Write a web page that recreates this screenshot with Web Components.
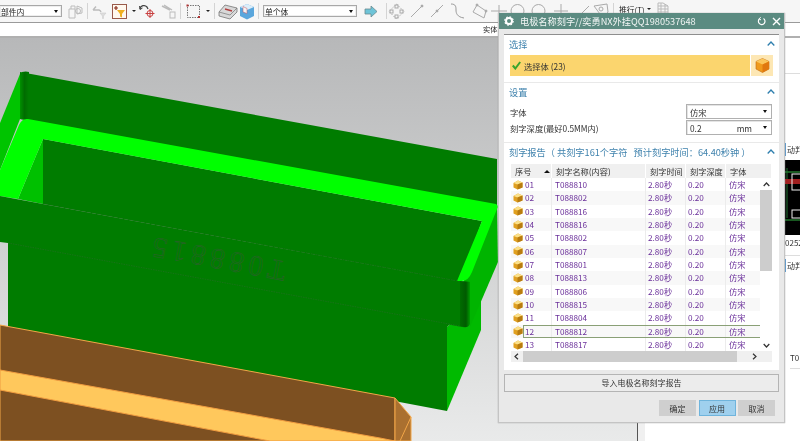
<!DOCTYPE html>
<html lang="zh">
<head>
<meta charset="utf-8">
<title>电极名称刻字</title>
<style>
  html, body { margin: 0; height: 100%; overflow: hidden; background: #fff; }
  body { font-family: "Noto Sans CJK SC", "Liberation Sans", sans-serif; }
  nx-toolbar, nx-side, nx-dialog { filter: blur(0.4px); }
</style>
</head>
<body>
<nx-app>
  <nx-toolbar slot="top"></nx-toolbar>
  <nx-viewport slot="scene"></nx-viewport>
  <nx-side slot="side"></nx-side>
  <nx-dialog slot="window" heading="电极名称刻字//奕勇NX外挂QQ1980537648">
    <nx-panel heading="选择" style="height:48px">
      <nx-pick label="选择体 (23)"></nx-pick>
    </nx-panel>
    <nx-panel heading="设置" style="height:59px">
      <nx-field label="字体" value="仿宋"></nx-field>
      <nx-field label="刻字深度(最好0.5MM内)" value="0.2" unit="mm"></nx-field>
    </nx-panel>
    <nx-panel heading="刻字报告（ 共刻字161个字符 &nbsp; 预计刻字时间：64.40秒钟 ）" style="height:227px">
      <nx-report></nx-report>
    </nx-panel>
  </nx-dialog>
</nx-app>

<script>
const CUBE = `<svg width="10" height="10" viewBox="0 0 10 10"><path d="M5 .5 9.5 2.5V7.5L4.5 9.5.5 7.5V3Z" fill="#e0a020"/><path d="M.5 3 5 .5 9.5 2.5 4.5 4.5Z" fill="#fbe08a"/><path d="M4.5 4.5 9.5 2.5V7.5L4.5 9.5Z" fill="#b87c10"/></svg>`;

class NxApp extends HTMLElement {
  constructor() {
    super();
    this.attachShadow({ mode: "open" });
    this.shadowRoot.innerHTML = `
    <style>
      :host { display: flex; flex-direction: column; position: relative; width: 800px; height: 441px; overflow: hidden; }
      .work { flex: 1; display: flex; min-height: 0; }
      .window { position: absolute; left: 498px; top: 13px; }
    </style>
    <slot name="top"></slot>
    <div class="work"><slot name="scene"></slot><slot name="side"></slot></div>
    <div class="window"><slot name="window"></slot></div>`;
  }
}

class NxToolbar extends HTMLElement {
  constructor() {
    super();
    this.attachShadow({ mode: "open" });
    const g = "#bcbcbc";
    this.shadowRoot.innerHTML = `
    <style>
      :host { display: block; height: 38px; background: #fff; font-size: 7.8px; color: #222; }
      .bar { height: 23px; box-sizing: border-box; display: flex; align-items: center; background: #f6f6f6; border-bottom: 1px solid #9a9a9a; overflow: hidden; white-space: nowrap; }
      .sel { height: 12px; box-sizing: border-box; border: 1px solid #a8a8a8; background: #fff; display: flex; align-items: center; justify-content: space-between; padding: 0 3px 0 1px; box-shadow: inset 0 0 0 1px #eee; flex: none; }
      .sel i { width: 0; height: 0; border: 2.5px solid transparent; border-top: 3px solid #111; border-bottom: 0; }
      svg { flex: none; display: block; }
      .sep { width: 1px; height: 16px; background: #d4d4d4; flex: none; }
      .drop { width: 0; height: 0; border: 2px solid transparent; border-top: 2.5px solid #222; border-bottom: 0; flex: none; }
      .ribbon { height: 15px; box-sizing: border-box; border-bottom: 2px solid #b0b0b0; padding-left: 483px; line-height: 13px; font-size: 7.2px; }
    </style>
    <div class="bar">
      <div class="sel" style="width:62px;border-left:0"><span>部件内</span><i></i></div>
      <svg style="margin-left:6px" width="15" height="15" viewBox="0 0 15 15" fill="none" stroke="${g}"><path d="M1 5h6v9H1zM3 5V2h4v3M9 2l5 2v5l-5 1z"/><circle cx="10" cy="7" r="2.5"/></svg>
      <div class="sep" style="margin-left:4px"></div>
      <svg style="margin-left:4px" width="15" height="15" viewBox="0 0 15 15" fill="none" stroke="${g}" stroke-width="1.4"><path d="M1 6 4 2.5M1 6h6a3 3 0 0 1 2 2"/><path d="M8 9h6l-2.5 3v2.5h-1V12z" fill="#ddd" stroke="#ccc" stroke-width=".6"/></svg>
      <svg style="margin-left:5px" width="15" height="15" viewBox="0 0 15 15"><rect x=".5" y=".5" width="14" height="14" fill="#fff8ee" stroke="#9a5a4a"/><path d="M2 4h4M4 2v4" stroke="#8a2a1a" stroke-width="1.2"/><path d="M5 6h8L10 10v3.5L8 12.5V10z" fill="#f0b020"/></svg>
      <div class="drop" style="margin-left:5px"></div>
      <svg style="margin-left:3px" width="17" height="16" viewBox="0 0 17 16" fill="none"><path d="M1 6a4 4 0 0 1 7-2l1 2" stroke="#444" stroke-width="1.3"/><path d="M.5 3 1 6.5 3.5 5" stroke="#444"/><circle cx="11" cy="10.5" r="3" stroke="#c84040"/><path d="M11 6v9M6.5 10.5h9" stroke="#c84040"/></svg>
      <svg style="margin-left:5px" width="15" height="15" viewBox="0 0 15 15" fill="none" stroke="#bbb"><path d="M1 2 9 6M3 1l8 5" stroke-width="1.4"/><rect x="9" y="8" width="5" height="6"/></svg>
      <div class="sep" style="margin-left:4px"></div>
      <svg style="margin-left:5px" width="15" height="15" viewBox="0 0 15 15" fill="none"><rect x="1.5" y="1.5" width="12" height="12" stroke="#777" stroke-dasharray="1.5 1"/><rect x=".5" y=".5" width="2" height="2" fill="#b03030"/><rect x="12" y="12" width="2" height="2" fill="#b03030"/></svg>
      <div class="drop" style="margin-left:5px"></div>
      <div class="sep" style="margin-left:4px"></div>
      <svg style="margin-left:3px" width="20" height="17" viewBox="0 0 20 17"><path d="M1 9 7 2l12 3v4l-7 7-11-3Z" fill="#d8d8d8" stroke="#666" stroke-width=".7"/><path d="M7 6l7 2" stroke="#b04040" stroke-width="1.5"/><path d="M1 9l11 3 7-7" fill="none" stroke="#777" stroke-width=".7"/></svg>
      <svg style="margin-left:1px" width="16" height="17" viewBox="0 0 16 17"><path d="M1 4 8 1l7 3v9l-7 3.5L1 13Z" fill="#5aa6dc"/><path d="M1 4l7 3 7-3-7-3Z" fill="#dceefa"/><path d="M4 3.5l4 2v5L4 9Z" fill="#f4f4f4" stroke="#c05060" stroke-width=".5"/></svg>
      <div class="sep" style="margin-left:3px"></div>
      <div class="sel" style="width:94px;margin-left:4px"><span>单个体</span><i></i></div>
      <svg style="margin-left:7px" width="14" height="13" viewBox="0 0 14 13"><path d="M1 4h6V1l6 5.5L7 12V9H1Z" fill="#6ec4d8" stroke="#6a8a90" stroke-width=".8"/></svg>
      <div class="sep" style="margin-left:8px"></div>
      <svg style="margin-left:1px" width="17" height="17" viewBox="0 0 17 17" fill="none" stroke="#aaa"><path d="M8.5 1 16 8.5 8.5 16 1 8.5Z" stroke-dasharray="1.5 1.5"/><rect x="7" y="2" width="3" height="3"/><rect x="2" y="7" width="3" height="3"/><rect x="12" y="7" width="3" height="3"/><rect x="7" y="12" width="3" height="3"/></svg>
      <svg style="margin-left:5px" width="14" height="14" viewBox="0 0 14 14" fill="none" stroke="#aaa"><path d="M1 13 12 2"/><circle cx="12" cy="2" r="1" fill="#999"/></svg>
      <svg style="margin-left:6px" width="14" height="14" viewBox="0 0 14 14" fill="none" stroke="#aaa"><path d="M1 13 13 1"/><circle cx="7" cy="7" r="1" fill="#999"/></svg>
      <svg style="margin-left:6px" width="15" height="16" viewBox="0 0 15 16" fill="none" stroke="#999"><path d="M1 1c5 0 5 3 5 6s1 7 8 8"/></svg>
      <svg style="margin-left:7px" width="18" height="16" viewBox="0 0 18 16" fill="none" stroke="#aaa"><path d="M1 9 5 2l9 6-2 7Z"/><circle cx="5" cy="2" r="1" fill="#aaa"/><circle cx="14" cy="8" r="1" fill="#aaa"/></svg>
      <svg style="margin-left:1px" width="16" height="16" viewBox="0 0 16 16" fill="none" stroke="#aaa"><path d="M8 2v13M0 8h16"/></svg>
      <svg style="margin-left:3px" width="15" height="16" viewBox="0 0 15 16" fill="none" stroke="#aaa"><circle cx="7.5" cy="8" r="6.5"/></svg>
      <svg style="margin-left:6px" width="15" height="16" viewBox="0 0 15 16" fill="none" stroke="#aaa"><circle cx="7.5" cy="8" r="6.5"/></svg>
      <svg style="margin-left:8px" width="14" height="16" viewBox="0 0 14 16" fill="none" stroke="#aaa"><path d="M7 1v14M0 8h14"/></svg>
      <svg style="margin-left:8px" width="14" height="16" viewBox="0 0 14 16" fill="none" stroke="#aaa"><path d="M1 15 13 3"/></svg>
      <svg style="margin-left:3px" width="16" height="16" viewBox="0 0 16 16" fill="none" stroke="#aaa"><path d="M1 3l13-2 1 8-5 6Z"/><circle cx="8" cy="6" r="2"/></svg>
      <div class="sep" style="margin-left:4px"></div>
      <span style="margin:0 0 4px 5px">推行(T)</span>
      <div class="drop" style="margin:0 0 4px 2px"></div>
      <svg style="margin:0 0 6px 6px" width="12" height="13" viewBox="0 0 12 13" fill="none" stroke="#bbb"><path d="M1 1h5l5 3v8H1zM1 4h10M1 7h10M1 10h10M4 1v11M8 2v10"/></svg>
    </div>
    <div class="ribbon">实体</div>`;
  }
}

class NxViewport extends HTMLElement {
  constructor() {
    super();
    this.attachShadow({ mode: "open" });
    this.shadowRoot.innerHTML = `
    <style>
      :host { display: block; width: 637px; height: 403px; flex: none; background: linear-gradient(#b7b8b9, #e9eaea); border-right: 1px solid #555; }
      svg { display: block; }
      text { font-family: "Liberation Serif", serif; font-size: 29px; letter-spacing: 5px; fill: none; stroke: #2c602c; stroke-width: .55; }
    </style>
    <svg width="637" height="403" viewBox="0 38 637 403">
      <defs>
        <linearGradient id="fil" x1="0" x2="1" y1="0" y2="0"><stop offset="0" stop-color="#009000"/><stop offset=".5" stop-color="#006c00"/><stop offset="1" stop-color="#007d00"/></linearGradient>
        <linearGradient id="fil2" x1="0" x2="1" y1="0" y2="0"><stop offset="0" stop-color="#006c00"/><stop offset=".6" stop-color="#005a00"/><stop offset="1" stop-color="#009a00"/></linearGradient>
      </defs>
      <path d="M447 327 481 296V330L447 411Z" fill="#00ba00"/>
      <path d="M8 240 452 322 447 327V411L8 328Z" fill="#007c00"/>
      <path d="M462 285 497 205 498 262 470 327Z" fill="#00b400"/>
      <path d="M0 123 20 74V119L0 170Z" fill="#00c400"/>
      <path d="M20 72 497 159V206L20 119Z" fill="#007c00"/>
      <path d="M22 72Q26 71 29 72V120L20 119V76Z" fill="url(#fil)"/>
      <path d="M43 139 482 221 460 282 43 204Z" fill="#007c00"/>
      <path d="M43 139V204L18 199Z" fill="#00c000"/>
      <path d="M0 170 19 125Q22 118 28 119L496 204Q499 206 497 209L472 272Q468 282 460 281L457 281 482 221 43 139 18 199 0 196Z" fill="#00ff00"/>
      <path d="M0 196 43 204 458 281 470 282V322Q470 328 462 327L8 243 0 242Z" fill="#007c00"/>
      <path d="M460 281 470 282V322Q470 328 464 327L460 326Z" fill="url(#fil2)"/>
      <path d="M43 204 458 281M8 243 460 326" stroke="#2f6a2f" stroke-width=".5" stroke-dasharray="1.5 1" fill="none"/>
      <text transform="translate(287 262) rotate(190.6)">T088815</text>
      <path d="M0 325 395 398V441H0Z" fill="#7d5021" stroke="#f2a648"/>
      <path d="M0 370 380 438 395 441H270L0 390Z" fill="#ffc85c" stroke="#f09c40"/>
      <path d="M395 398 411 417V441H395Z" fill="#aa7030" stroke="#f2a648"/>
      <path d="M411 417 400 441" stroke="#f2a648"/>
    </svg>`;
  }
}

class NxSide extends HTMLElement {
  constructor() {
    super();
    this.attachShadow({ mode: "open" });
    this.shadowRoot.innerHTML = `
    <style>
      :host { display: block; flex: 1; border-left: 7px solid #f0f0f0; background: #fff; font-size: 8px; color: #333; overflow: hidden; white-space: nowrap; }
      .a { height: 35px; border-bottom: 1px solid #ddd; }
      .b { height: 69px; }
      .lab { margin-left: 140px; height: 13px; line-height: 13px; border-left: 1px solid #5a9ad0; padding-left: 1px; }
      svg { display: block; margin: 4px 0 0 140px; }
      .code { margin-left: 140px; height: 20px; line-height: 16px; border-bottom: 1px solid #ddd; }
      .t { margin: 80px 0 0 145px; height: 16px; border-bottom: 1px solid #ddd; }
    </style>
    <div class="a"></div>
    <div class="b"></div>
    <div class="lab">动判</div>
    <svg width="20" height="75" viewBox="0 0 20 75"><rect width="20" height="75" fill="#000"/><path d="M0 12h20M0 60h20" stroke="#30b040"/><path d="M2 8v50" stroke="#207030"/><rect x="0" y="19" width="20" height="5" fill="#a02020"/><rect x="7" y="14" width="10" height="16" fill="none" stroke="#eee"/><rect x="7" y="50" width="9" height="8" fill="none" stroke="#eee"/></svg>
    <div class="code">0252</div>
    <div class="lab" style="margin-top:3px">动判</div>
    <div class="t">T0</div>`;
  }
}

class NxDialog extends HTMLElement {
  constructor() {
    super();
    this.attachShadow({ mode: "open" });
    this.shadowRoot.innerHTML = `
    <style>
      :host { display: block; width: 287px; height: 410px; box-sizing: border-box; background: #e9e9e9; border: 1px solid #c4c4c4; border-top: 0; box-shadow: 0 0 1px #999; }
      .title { height: 16px; background: #5b8b81; color: #f2f6f5; display: flex; align-items: center; padding: 0 3px 0 5px; font-size: 9.2px; gap: 6px; }
      .title span { flex: 1; white-space: nowrap; }
      svg { display: block; flex: none; }
      .body { padding: 5px 5px 0; display: flex; flex-direction: column; gap: 1px; }
      .body ::slotted(nx-panel:first-child) { border-top: 1px solid #8e8e8e; }
      .import { margin: 4px 5px 0; height: 18px; box-sizing: border-box; border: 1px solid #b4b4b4; background: #ececec; text-align: center; font-size: 8px; line-height: 16px; color: #333; }
      .actions { display: flex; justify-content: flex-end; gap: 2.5px; padding: 8px 9px 0 0; }
      button { width: 37px; height: 16px; padding: 0; border: 0; background: #cfcfcf; font: inherit; font-size: 8px; color: #333; }
      button.on { background: #9fd0ee; border: 1px solid #6fb4dc; }
    </style>
    <div class="title">
      <svg width="10" height="10" viewBox="0 0 10 10"><circle cx="5" cy="5" r="3" fill="none" stroke="#fff" stroke-width="2"/><circle cx="5" cy="5" r="4.2" fill="none" stroke="#fff" stroke-width="1.2" stroke-dasharray="1.6 1.7"/></svg>
      <span>${this.getAttribute("heading")}</span>
      <svg width="9" height="9" viewBox="0 0 9 9" fill="none" stroke="#fff" stroke-width="1.2"><path d="M6.5 1.5A3.3 3.3 0 1 1 2.5 1.8"/><path d="M3.6.2 2.3 1.9 4 3" stroke-width="1"/></svg>
      <svg width="9" height="9" viewBox="0 0 9 9" stroke="#fff" stroke-width="1.4"><path d="M1 1 8 8M8 1 1 8"/></svg>
    </div>
    <div class="body"><slot></slot></div>
    <div class="import">导入电极名称刻字报告</div>
    <div class="actions"><button>确定</button><button class="on">应用</button><button>取消</button></div>`;
  }
}

class NxPanel extends HTMLElement {
  constructor() {
    super();
    this.attachShadow({ mode: "open" });
    this.shadowRoot.innerHTML = `
    <style>
      :host { display: block; box-sizing: border-box; background: #fff; overflow: hidden; }
      .head { height: 17px; display: flex; align-items: center; justify-content: space-between; padding: 0 4px 0 5px; color: #3f82ad; font-size: 9.2px; white-space: nowrap; }
      svg { display: block; flex: none; }
      .content { padding: 3px 6px 0; }
    </style>
    <div class="head"><span>${this.getAttribute("heading")}</span>
      <svg width="8" height="5" viewBox="0 0 8 5" fill="none" stroke="#2f7fae" stroke-width="1.3"><path d="M.7 4.5 4 1l3.3 3.5"/></svg></div>
    <div class="content"><slot></slot></div>`;
  }
}

class NxPick extends HTMLElement {
  constructor() {
    super();
    this.attachShadow({ mode: "open" });
    this.shadowRoot.innerHTML = `
    <style>
      :host { display: flex; height: 21px; gap: 1px; font-size: 8.3px; color: #333; }
      .row { flex: 1; background: #fbd56e; display: flex; align-items: center; gap: 3px; padding-left: 2px; }
      .btn { width: 22px; background: #fde7b4; display: flex; align-items: center; justify-content: center; }
    </style>
    <div class="row">
      <svg width="9" height="9" viewBox="0 0 9 9" fill="none" stroke="#3aa52e" stroke-width="2"><path d="M.8 4.5 3.3 7.5 8.2 1"/></svg>
      <span>${this.getAttribute("label")}</span>
    </div>
    <div class="btn"><svg width="15" height="15" viewBox="0 0 15 15"><path d="M7.5.5 14 3.5V11l-6.5 3.5L1 11V3.5Z" fill="#f09a1c" stroke="#c06a10" stroke-width=".6"/><path d="M1 3.5 7.5 .5 14 3.5 7.5 6.5Z" fill="#fbc65c"/><path d="M7.5 6.5 14 3.5V11l-6.5 3.5Z" fill="#e0780f"/></svg></div>`;
  }
}

class NxField extends HTMLElement {
  constructor() {
    super();
    this.attachShadow({ mode: "open" });
    const unit = this.getAttribute("unit");
    this.shadowRoot.innerHTML = `
    <style>
      :host { display: flex; align-items: center; justify-content: space-between; height: 15px; margin: 1px 1px 1px 0; font-size: 8.3px; color: #333; white-space: nowrap; }
      .box { width: 86px; height: 15px; box-sizing: border-box; border: 1px solid #b0b0b0; background: #fff; display: flex; align-items: center; padding: 0 4px 0 3px; box-shadow: inset 1px 1px 0 #e4e4e4; }
      .val { flex: 1; }
      .unit { margin-right: 11px; }
      i { width: 0; height: 0; border: 2.5px solid transparent; border-top: 3px solid #111; border-bottom: 0; }
    </style>
    <span>${this.getAttribute("label")}</span>
    <div class="box"><span class="val">${this.getAttribute("value")}</span>${unit ? `<span class="unit">${unit}</span>` : ""}<i></i></div>`;
  }
}

class NxRow extends HTMLElement {
  constructor() {
    super();
    this.attachShadow({ mode: "open" });
  }

  connectedCallback() {
    this.shadowRoot.innerHTML = `
    <style>
      :host { display: grid; grid-template-columns: 41px 94px 40px 40px 34px; height: 13.33px; position: relative; color: #6a2f9a; font-size: 8.2px; line-height: 13px; white-space: nowrap; }
      :host(:nth-child(even)) { background: #f8f8f8; }
      .cell { border-right: 1px solid #ececec; box-sizing: border-box; padding-left: 2px; overflow: hidden; }
      .num { display: flex; align-items: center; gap: 2px; }
      .cell:last-of-type { border-right: 0; padding-left: 3px; }
      svg { display: block; flex: none; }
      .frame { position: absolute; inset: 0 0 0 12px; border: 1px solid #8aa076; border-right: 0; }
    </style>
    <div class="cell num">${CUBE}<span>${this.getAttribute("num")}</span></div>
    <div class="cell" style="padding-left:3px">${this.getAttribute("name")}</div>
    <div class="cell">2.80秒</div>
    <div class="cell">0.20</div>
    <div class="cell">仿宋</div>
    ${this.hasAttribute("selected") ? '<span class="frame"></span>' : ""}`;
  }
}

class NxReport extends HTMLElement {
  constructor() {
    super();
    this.attachShadow({ mode: "open" });
    const names = ["T088810", "T088802", "T088816", "T088816", "T088802", "T088807", "T088801", "T088813", "T088806", "T088815", "T088804", "T088812", "T088817"];
    const rows = names.map((name, i) => {
      const num = String(i + 1).padStart(2, "0");
      return `<nx-row num="${num}" name="${name}"${i === 11 ? " selected" : ""}></nx-row>`;
    }).join("");
    this.shadowRoot.innerHTML = `
    <style>
      :host { display: block; width: 261px; margin: 1px 0 0 1px; background: #f0f0f0; font-size: 8.2px; color: #333; }
      .head { display: grid; grid-template-columns: 41px 94px 40px 40px 46px; height: 14px; line-height: 14px; background: #f0f0f0; white-space: nowrap; }
      .head div { padding-left: 4px; border-right: 1px solid #fff; display: flex; justify-content: space-between; align-items: center; box-sizing: border-box; }
      .head i { width: 0; height: 0; border: 3px solid transparent; border-bottom: 3px solid #111; border-top: 0; margin-right: 1px; }
      .main { display: flex; height: 173.3px; }
      .rows { width: 249px; background: #fff; overflow: hidden; }
      .v { width: 12px; display: flex; flex-direction: column; background: #fff; align-items: center; }
      .thumb { width: 12px; height: 81px; background: #cdcdcd; }
      .cap { height: 12px; flex: none; display: flex; align-items: center; justify-content: center; }
      .v .rest { flex: 1; }
      .h { display: flex; height: 11px; align-items: center; }
      .h .bar { width: 214px; height: 11px; background: #cdcdcd; margin-left: 1px; }
      .h .cap { width: 11px; }
      svg { display: block; }
    </style>
    <div class="head"><div>序号<i></i></div><div>刻字名称(内容)</div><div>刻字时间</div><div>刻字深度</div><div>字体</div></div>
    <div class="main">
      <div class="rows">${rows}</div>
      <div class="v">
        <div class="cap"><svg width="7" height="5" viewBox="0 0 7 5" fill="none" stroke="#333" stroke-width="1.2"><path d="M.7 4 3.5 1 6.3 4"/></svg></div>
        <div class="thumb"></div><div class="rest"></div>
        <div class="cap"><svg width="7" height="5" viewBox="0 0 7 5" fill="none" stroke="#333" stroke-width="1.2"><path d="M.7 1 3.5 4 6.3 1"/></svg></div>
      </div>
    </div>
    <div class="h">
      <div class="cap"><svg width="5" height="7" viewBox="0 0 5 7" fill="none" stroke="#333" stroke-width="1.2"><path d="M4 .7 1 3.5 4 6.3"/></svg></div>
      <div class="bar"></div>
      <div style="flex:1"></div>
      <div class="cap" style="margin-right:12px"><svg width="5" height="7" viewBox="0 0 5 7" fill="none" stroke="#333" stroke-width="1.2"><path d="M1 .7 4 3.5 1 6.3"/></svg></div>
    </div>`;
  }
}

customElements.define("nx-app", NxApp);
customElements.define("nx-toolbar", NxToolbar);
customElements.define("nx-viewport", NxViewport);
customElements.define("nx-side", NxSide);
customElements.define("nx-dialog", NxDialog);
customElements.define("nx-panel", NxPanel);
customElements.define("nx-pick", NxPick);
customElements.define("nx-field", NxField);
customElements.define("nx-row", NxRow);
customElements.define("nx-report", NxReport);
</script>
</body>
</html>
